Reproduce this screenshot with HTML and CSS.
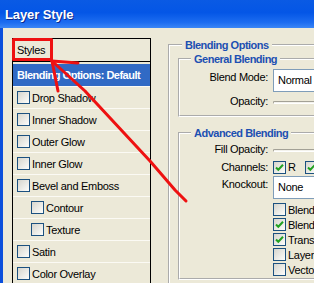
FILE: index.html
```html
<!DOCTYPE html>
<html lang="en">
<head>
    <meta charset="UTF-8">
    <title>Layer Style</title>
    <link rel="stylesheet" href="styles.css">
</head>
<body>
    <div class="window">
        <div class="titlebar"><span class="title">Layer Style</span></div>
        <div class="client">
            <div class="styles-list">
                <div class="list-head">Styles</div>
                <ul class="effects">
                    <li class="effect selected">Blending Options: Default</li>
                    <li class="effect"><span class="check"></span>Drop Shadow</li>
                    <li class="effect"><span class="check"></span>Inner Shadow</li>
                    <li class="effect"><span class="check"></span>Outer Glow</li>
                    <li class="effect"><span class="check"></span>Inner Glow</li>
                    <li class="effect"><span class="check"></span>Bevel and Emboss</li>
                    <li class="effect sub"><span class="check"></span>Contour</li>
                    <li class="effect sub"><span class="check"></span>Texture</li>
                    <li class="effect"><span class="check"></span>Satin</li>
                    <li class="effect"><span class="check"></span>Color Overlay</li>
                </ul>
            </div>

            <div class="options">
                <fieldset class="group outer">
                    <legend>Blending Options</legend>

                    <fieldset class="group general">
                        <legend>General Blending</legend>
                        <div class="field">
                            <label class="field-label boxed">Blend Mode:</label>
                            <div class="select">Normal</div>
                        </div>
                        <div class="field opacity-row">
                            <label class="field-label">Opacity:</label>
                            <div class="slider"></div>
                        </div>
                    </fieldset>

                    <fieldset class="group advanced">
                        <legend>Advanced Blending</legend>
                        <div class="field fill-row">
                            <label class="field-label">Fill Opacity:</label>
                            <div class="slider"></div>
                        </div>
                        <div class="field channels-row">
                            <label class="field-label">Channels:</label>
                            <div class="channels">
                                <span class="check checked"><svg viewBox="0 0 11 11"><path d="M2 5.5 L4.3 7.8 L9 2.8"/></svg></span><span class="channel">R</span>
                                <span class="check checked"><svg viewBox="0 0 11 11"><path d="M2 5.5 L4.3 7.8 L9 2.8"/></svg></span><span class="channel">G</span>
                                <span class="check checked"><svg viewBox="0 0 11 11"><path d="M2 5.5 L4.3 7.8 L9 2.8"/></svg></span><span class="channel">B</span>
                            </div>
                        </div>
                        <div class="field knockout-row">
                            <label class="field-label boxed">Knockout:</label>
                            <div class="select">None</div>
                        </div>
                        <ul class="check-list">
                            <li><span class="check"></span>Blend Interior Effects as Group</li>
                            <li><span class="check checked"><svg viewBox="0 0 11 11"><path d="M2 5.5 L4.3 7.8 L9 2.8"/></svg></span>Blend Clipped Layers as Group</li>
                            <li><span class="check checked"><svg viewBox="0 0 11 11"><path d="M2 5.5 L4.3 7.8 L9 2.8"/></svg></span>Transparency Shapes Layer</li>
                            <li><span class="check"></span>Layer Mask Hides Effects</li>
                            <li><span class="check"></span>Vector Mask Hides Effects</li>
                        </ul>
                    </fieldset>
                </fieldset>
            </div>
        </div>

        <!-- red markup drawn over the dialog -->
        <svg class="annotation" width="314" height="283" viewBox="0 0 314 283">
            <rect x="13.5" y="39.5" width="38" height="20" />
            <polyline points="52,61 78,63" />
            <polyline points="52,61 58,91" />
            <polyline points="52,61 85,91 150,161 175,190 186,201" />
        </svg>
    </div>
</body>
</html>
```

FILE: styles.css
```css
html, body {
    margin: 0;
    overflow: hidden;
}
body {
    font-family: "Liberation Sans", Arial, sans-serif;
    font-size: 11px;
    letter-spacing: -0.3px;
    color: #000;
}
.window {
    position: relative;
    width: 314px;
    height: 283px;
    overflow: hidden;
    background: #ece9d8;
    display: flex;
    flex-direction: column;
}
.titlebar {
    height: 28px;
    flex: none;
    display: flex;
    align-items: center;
    padding-left: 5px;
    background: linear-gradient(#0a5ae4 0%, #0456e6 45%, #1c6cf0 80%, #3b86f6 100%);
}
.title {
    color: #fff;
    font-weight: bold;
    font-size: 13px;
    letter-spacing: -0.1px;
    text-shadow: 1px 1px 0 #0b2a8c;
}
.client {
    flex: 1;
    display: flex;
    padding: 10px 0 0 9px;
    border-left: 3px solid #0b4fdc;
}

/* left styles list */
.styles-list {
    width: 137px;
    flex: none;
    border: 1px solid #000;
    border-bottom: none;
}
.list-head {
    height: 22px;
    line-height: 22px;
    padding-left: 4px;
    border-bottom: 1px solid #000;
}
.effects {
    list-style: none;
    margin: 0;
    padding: 2px 0 0 0;
}
.effect {
    display: flex;
    align-items: center;
    height: 21px;
    padding-left: 4px;
    border-bottom: 1px solid #fbfaf4;
    white-space: nowrap;
}
.effect.selected {
    height: 22px;
    background: #316ac5;
    color: #fff;
    font-weight: bold;
    letter-spacing: -0.5px;
}
.effect.sub {
    padding-left: 18px;
}
.effect .check {
    margin-right: 2px;
}

.check {
    display: inline-block;
    flex: none;
    width: 11px;
    height: 11px;
    border: 1px solid #1c5180;
    background: linear-gradient(135deg, #d6d5cd, #fdfdfb);
}
.check svg {
    display: block;
    width: 11px;
    height: 11px;
}
.check path {
    fill: none;
    stroke: #21a121;
    stroke-width: 2;
}

/* right options */
.options {
    margin-left: 17px;
    width: 220px;
    flex: none;
}
.group {
    margin: 0;
    padding: 0;
    min-width: 0;
    border: 2px groove #fff;
}
.group legend {
    padding: 0 3px;
    line-height: 14px;
    font-weight: bold;
    letter-spacing: -0.5px;
    color: #1d50b2;
}
.outer {
    padding-bottom: 10px;
}
.outer > legend {
    margin-left: 12px;
}
.general,
.advanced {
    margin-left: 8px;
}
.general > legend,
.advanced > legend {
    margin-left: 11px;
}
.general {
    padding: 3px 0 7px 0;
}
.advanced {
    margin-top: 9px;
    padding: 2px 0 2px 0;
}
.field {
    display: grid;
    grid-template-columns: 88px 1fr;
    column-gap: 5px;
    align-items: start;
}
.field-label {
    text-align: right;
    line-height: 14px;
    white-space: nowrap;
}
.field-label.boxed {
    padding-top: 1px;
}
.select {
    height: 21px;
    line-height: 21px;
    padding-left: 4px;
    background: #fff;
    border: 1px solid #7f9db9;
}
.slider {
    margin-top: 7px;
    height: 1px;
    border: 1px solid #a3a196;
    border-bottom-color: #fff;
    border-right: none;
    border-radius: 2px 0 0 2px;
    background: #f3f2ec;
}
.opacity-row {
    margin-top: 2px;
}
.channels-row {
    margin-top: 4px;
}
.channels {
    display: flex;
    align-items: center;
    height: 14px;
}
.channel {
    margin-left: 2px;
    margin-right: 9px;
}
.knockout-row {
    margin-top: 2px;
}
.check-list {
    list-style: none;
    margin: 4px 0 0 93px;
    padding: 0;
    display: flex;
    flex-direction: column;
    gap: 2px;
}
.check-list li {
    display: flex;
    align-items: center;
    gap: 2px;
    height: 13px;
    white-space: nowrap;
}

.annotation {
    position: absolute;
    top: 0;
    left: 0;
    pointer-events: none;
}
.annotation rect,
.annotation polyline {
    fill: none;
    stroke: #ee1111;
    stroke-width: 3;
    stroke-linejoin: round;
    stroke-linecap: round;
}
```
